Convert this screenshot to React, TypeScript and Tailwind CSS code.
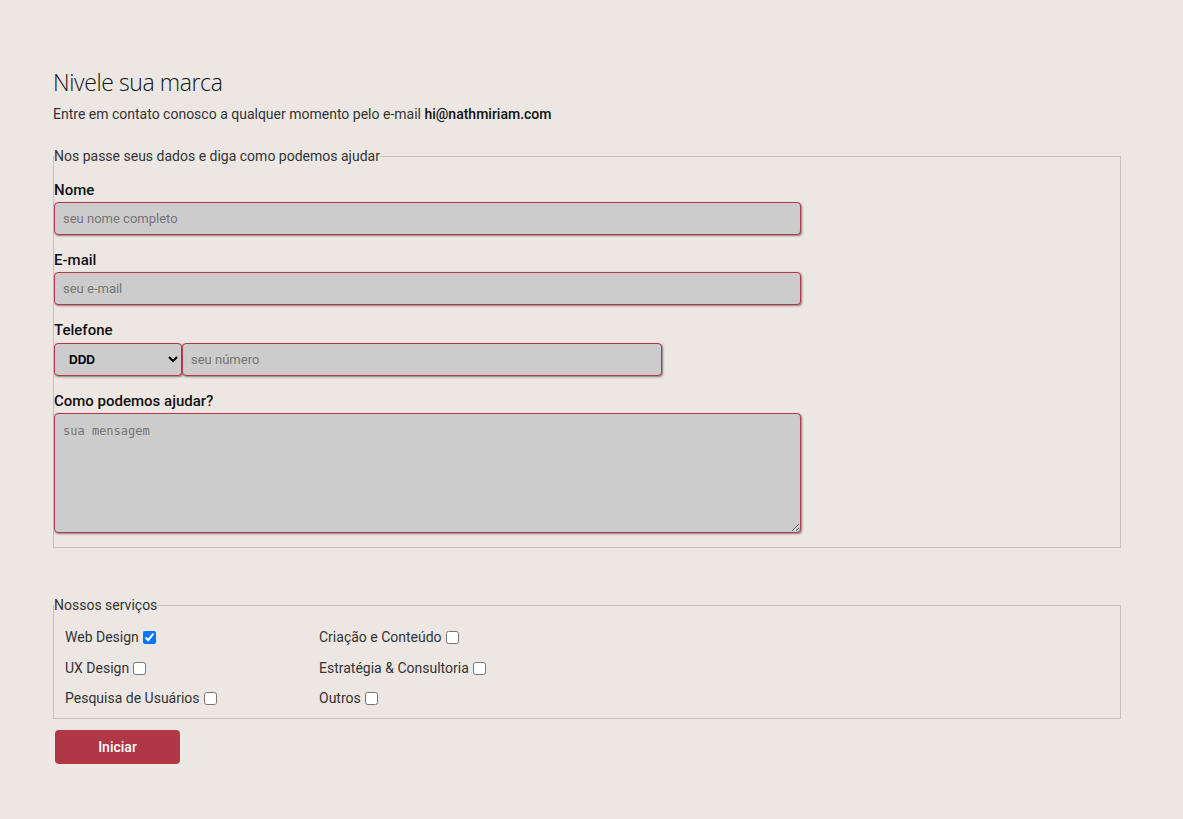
import { useState } from 'react';

const servicos = [
  { nome: 'Web Design', marcado: true },
  { nome: 'Criação e Conteúdo', marcado: false },
  { nome: 'UX Design', marcado: false },
  { nome: 'Estratégia & Consultoria', marcado: false },
  { nome: 'Pesquisa de Usuários', marcado: false },
  { nome: 'Outros', marcado: false },
];

const inputClasses =
  "h-[33px] rounded-[4px] border border-[#b5384a] bg-[#cccccc] px-[8px] text-[13px] text-[#222] shadow-[1px_1px_2px_rgba(0,0,0,0.45)] outline-none placeholder:text-[#757575] font-['Roboto',sans-serif]";

const labelClasses = 'mt-[15px] text-[15px] leading-[20px] font-medium text-[#111]';

const App = () => {
  const [marcados, setMarcados] = useState<boolean[]>(servicos.map((s) => s.marcado));

  const toggle = (idx: number) => {
    setMarcados((prev) => prev.map((v, i) => (i === idx ? !v : v)));
  };

  return (
    <div className="min-h-screen bg-[#ece7e3] px-[53px] pt-[66px] pb-10 text-[#333] font-['Roboto',sans-serif]">
      {/* Cabeçalho */}
      <h1 className="text-[23px] leading-[32px] font-light text-[#111] font-['Open_Sans',sans-serif] tracking-[-0.4px]">
        Nivele sua marca
      </h1>
      <p className="mt-[6px] text-[14px] leading-[20px] text-[#333]">
        Entre em contato conosco a qualquer momento pelo e-mail{' '}
        <span className="font-medium text-[#111]">hi@nathmiriam.com</span>
      </p>

      {/* Dados */}
      <fieldset className="mt-[23px] w-[1068px] border border-[#c4c1be] pb-[14px]">
        <legend className="text-[14px] leading-[18px] text-[#333]">Nos passe seus dados e diga como podemos ajudar</legend>

        <div className="flex flex-col">
          <label className={labelClasses}>Nome</label>
          <input className={`mt-[2px] w-[747px] ${inputClasses}`} placeholder="seu nome completo" />

          <label className={labelClasses}>E-mail</label>
          <input className={`mt-[2px] w-[747px] ${inputClasses}`} placeholder="seu e-mail" />

          <label className={labelClasses}>Telefone</label>
          <div className="mt-[3px] flex">
            <select className="h-[33px] w-[128px] rounded-[4px] border border-[#b5384a] bg-[#cccccc] pl-[10px] pr-[4px] text-[12px] font-bold text-black shadow-[1px_1px_2px_rgba(0,0,0,0.45)] outline-none font-['Liberation_Sans',sans-serif]">
              <option>DDD</option>
            </select>
            <input className={`w-[480px] ${inputClasses}`} placeholder="seu número" />
          </div>

          <label className={labelClasses}>Como podemos ajudar?</label>
          <textarea
            className="mt-[2px] h-[120px] w-[747px] rounded-[4px] border border-[#b5384a] bg-[#cccccc] px-[8px] py-[8px] text-[12px] text-[#222] shadow-[1px_1px_2px_rgba(0,0,0,0.45)] outline-none placeholder:text-[#757575] font-['DejaVu_Sans_Mono',monospace]"
            placeholder="sua mensagem"
          />
        </div>
      </fieldset>

      {/* Serviços */}
      <fieldset className="mt-[48px] w-[1068px] border border-[#c4c1be] px-[11px] pb-[9px]">
        <legend className="-ml-[11px] text-[14px] leading-[18px] text-[#333]">Nossos serviços</legend>
        <div className="grid grid-cols-[254px_254px] gap-y-[9.5px] pt-[13px]">
          {servicos.map((s, idx) => (
            <label key={s.nome} className="flex h-[21px] items-center text-[14px] leading-[21px] text-[#333]">
              {s.nome}
              <input
                type="checkbox"
                checked={marcados[idx]}
                onChange={() => toggle(idx)}
                className="ml-[4px] h-[13px] w-[13px]"
              />
            </label>
          ))}
        </div>
      </fieldset>

      <button className="mt-[11px] ml-[2px] h-[34px] w-[125px] rounded-[4px] bg-[#b03746] text-[14px] font-medium text-white">
        Iniciar
      </button>
    </div>
  );
};

export default App;
